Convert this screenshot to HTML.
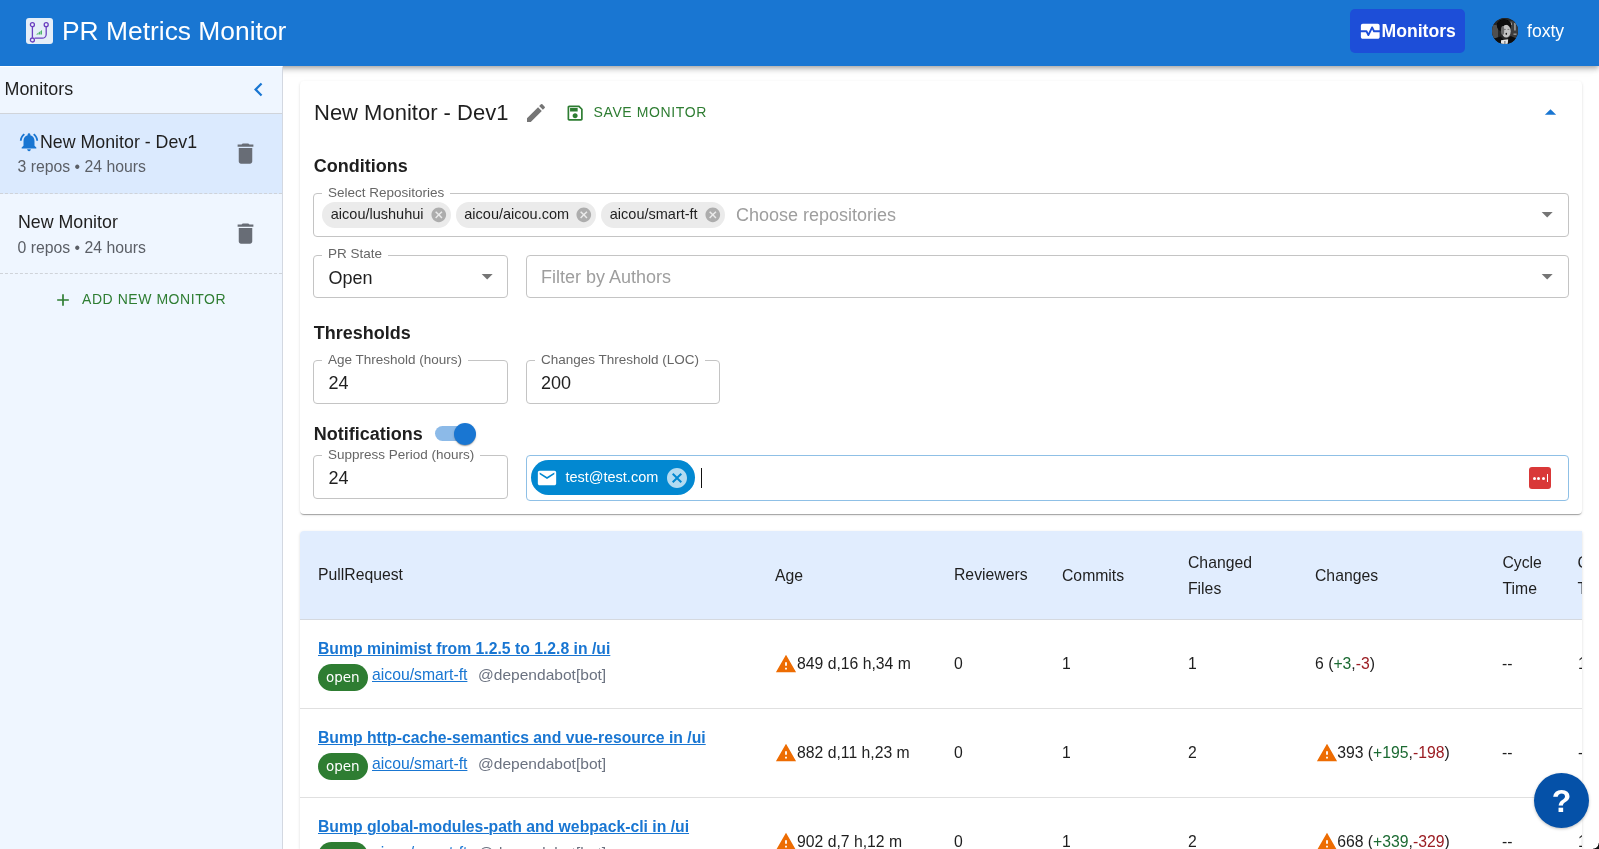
<!DOCTYPE html>
<html lang="en">
<head>
<meta charset="utf-8">
<title>PR Metrics Monitor</title>
<style>
*{box-sizing:border-box;margin:0;padding:0}
html,body{width:1599px;height:849px;overflow:hidden;background:#fff}
body{font-family:"Liberation Sans",Arial,Helvetica,sans-serif;color:#1f1f1f;position:relative;-webkit-font-smoothing:antialiased}
.abs{position:absolute;white-space:nowrap}
/* header */
#appbar{will-change:transform;position:absolute;left:0;top:0;width:1599px;height:66px;background:#1976d2;box-shadow:0 2px 4px -1px rgba(0,0,0,.2),0 4px 5px 0 rgba(0,0,0,.14),0 1px 10px 0 rgba(0,0,0,.12);z-index:5}
#logo{position:absolute;left:26px;top:18px;width:27px;height:26px;border-radius:3px;background:#e5eef8;overflow:hidden}
#apptitle{left:62px;top:16px;font-size:26.4px;line-height:30px;color:#fff}
#navbtn{position:absolute;left:1350px;top:9px;width:115px;height:44px;border-radius:5px;background:#1d4ed8}
#navbtn span{position:absolute;left:31.5px;top:11px;font-size:17.6px;line-height:22px;font-weight:700;color:#fff}
#avatar{position:absolute;left:1492px;top:18px;width:26px;height:26px;border-radius:50%;overflow:hidden;background:#222}
#uname{left:1527px;top:20px;font-size:17.6px;line-height:22px;color:#fff}
/* sidebar */
#side{will-change:transform;position:absolute;left:0;top:66px;width:283px;height:783px;background:#eff6ff;border-right:1px solid #d3d8e1;border-top:1px solid #fff;z-index:6}
#sidehead{position:absolute;left:0;top:-2px;width:282px;height:49px;border-bottom:1px solid #d0d4da}
#sidehead span{position:absolute;left:4.500px;top:13px;font-size:17.900px;line-height:22px;color:#1f1f1f}
.mon{position:absolute;left:0;width:282px;height:80px;border-bottom:1px dashed #cfd3d9}
.mon.sel{background:#dbeafe}
.mon .t{position:absolute;top:17px;font-size:17.800px;line-height:22px;color:#1f1f1f;white-space:nowrap}
.mon .s{position:absolute;left:17.500px;top:42.600px;font-size:15.8px;line-height:20px;color:#5b5f66;white-space:nowrap}
.mon svg.trash{position:absolute;left:231.700px;top:25.800px}
#addmon{left:82px;top:222px;font-size:14px;line-height:20px;color:#2e7d32;letter-spacing:.55px}
/* card */
#card{will-change:transform;position:absolute;left:300px;top:81px;width:1282px;height:433px;background:#fff;border-radius:4px;box-shadow:0 2px 1px -1px rgba(0,0,0,.2),0 1px 1px 0 rgba(0,0,0,.14),0 1px 3px 0 rgba(0,0,0,.12)}
#card h2{position:absolute;left:14px;top:18px;font-size:22px;line-height:26px;font-weight:400;color:#1f1f1f;white-space:nowrap}
#savebtn{left:293.600px;top:20px;font-size:14px;line-height:20px;color:#2e7d32;letter-spacing:.600px}
.sec{position:absolute;left:13.800px;font-size:18px;line-height:22px;font-weight:700;color:#1f1f1f;white-space:nowrap}
.fld{position:absolute;border:1px solid #c4c4c4;border-radius:4px}
.fld .lb{position:absolute;left:8px;top:-9px;padding:0 6px;background:#fff;font-size:13.5px;line-height:16px;color:#666;white-space:nowrap}
.fld .v{position:absolute;left:14.400px;top:10.400px;font-size:18px;line-height:22px;color:#1f1f1f;white-space:nowrap}
.fld .ph{position:absolute;top:10px;font-size:18px;line-height:22px;color:#9e9e9e;white-space:nowrap}
.chip{position:absolute;top:8px;height:26px;border-radius:13px;background:#ebebeb;font-size:14.500px;line-height:25px;color:#1f1f1f;padding-left:8.800px;white-space:nowrap}
.chip svg{position:absolute;right:3.900px;top:4px;width:17.600px;height:17.600px;fill:#adadad}
svg.dd{position:absolute;width:26.400px;height:26.400px;fill:#757575}
#sw{position:absolute;left:135px;top:340px;width:42px;height:24px}
#sw i{position:absolute;left:0;top:4px;width:37.400px;height:15.400px;border-radius:8px;background:#8cbae8}
#sw b{position:absolute;left:19px;top:.800px;width:22px;height:22px;border-radius:50%;background:#1976d2;box-shadow:0 2px 1px -1px rgba(0,0,0,.2),0 1px 1px 0 rgba(0,0,0,.14),0 1px 3px 0 rgba(0,0,0,.12)}
#echip{position:absolute;left:4px;top:4px;width:164px;height:35px;border-radius:18px;background:#0288d1}
#echip span{position:absolute;left:34.400px;top:8px;font-size:14.500px;line-height:18px;color:#fff;white-space:nowrap}
#caret{position:absolute;left:174px;top:11.500px;width:1px;height:20px;background:#111}
#pwicon{position:absolute;left:1002px;top:11px;width:22px;height:22px;border-radius:3px;background:#d93838}
#pwicon i{position:absolute;top:9.500px;width:3px;height:3px;border-radius:50%;background:#fff}
#pwicon i:nth-child(1){left:3.500px}#pwicon i:nth-child(2){left:8px}#pwicon i:nth-child(3){left:12.500px}
#pwicon b{position:absolute;left:17.500px;top:7px;width:1px;height:8px;background:#fff}
#cardin{position:absolute;left:0;top:1px;width:1282px;height:432px}
/* table */
#tbl{will-change:transform;position:absolute;left:300px;top:531px;width:1282px;height:318px;overflow:hidden;background:#fff;border-top-left-radius:4px;box-shadow:0 1px 3px rgba(0,0,0,.15)}
#thead{position:absolute;left:0;top:0;width:1282px;height:89px;background:#e1edfe;border-bottom:1px solid #d5d9df}
.th{position:absolute;font-size:15.75px;line-height:26px;color:#1f1f1f;white-space:nowrap}
.row{position:absolute;left:0;width:1282px;height:89px;border-bottom:1px solid #e0e0e0}
.row .c{position:absolute;top:34px;font-size:15.75px;line-height:20px;color:#1f1f1f;white-space:nowrap}
.row a.pt{position:absolute;left:18px;top:19px;font-size:15.75px;line-height:20px;font-weight:700;color:#1976d2;text-decoration:underline;text-decoration-thickness:1px;white-space:nowrap}
.row .badge{position:absolute;left:18px;top:44px;width:49.600px;height:27px;border-radius:14px;background:#2e7d32;color:#fff;font-family:"DejaVu Sans","Liberation Sans",sans-serif;font-size:13.5px;line-height:27px;text-align:center}
.row a.rp{position:absolute;left:72px;top:45px;font-size:15.75px;line-height:20px;color:#1976d2;text-decoration:underline;text-decoration-thickness:1px;white-space:nowrap}
.row .au{position:absolute;left:178px;top:45px;font-size:15.550px;line-height:20px;color:#6b7280;white-space:nowrap}
.g{color:#1b6a32}.r{color:#9b1c22}
svg.warn{position:absolute}
#help{will-change:transform;position:absolute;left:1534px;top:773px;width:55px;height:55px;border-radius:50%;background:#0551a8;color:#fff;font-size:32px;line-height:56px;font-weight:700;text-align:center;box-shadow:0 1px 3px rgba(0,0,0,.25);z-index:9}
#corner{position:absolute;right:0;bottom:0;width:6px;height:6px;background:radial-gradient(circle at 0 0,transparent 5.200px,#111 6px);z-index:10}
</style>
</head>
<body>
<header id="appbar">
  <div id="logo"><svg width="27" height="26" viewBox="0 0 27 26" fill="none">
    <path d="M6.4 9v4.5M6.4 13.5v6.3M8.6 20.2h7.6a4 4 0 0 0 4-4V9" stroke="#6a3fbf" stroke-width="1.300"/>
    <circle cx="6.4" cy="6.7" r="2" stroke="#6a3fbf" stroke-width="1.300" fill="#e9f0fa"/>
    <circle cx="20.2" cy="6.7" r="2" stroke="#6a3fbf" stroke-width="1.300" fill="#e9f0fa"/>
    <circle cx="6.4" cy="22" r="2" stroke="#6a3fbf" stroke-width="1.300" fill="#e9f0fa"/>
    <path d="M10 16.600l2-1.500v1.500zM12.400 16.600v-1.900l1.600-1.200v3.100zM14.400 16.600v-3.400l1.600-1.200v4.600z" fill="#4db36a"/>
  </svg></div>
  <div class="abs" id="apptitle">PR Metrics Monitor</div>
  <div id="navbtn"><svg style="position:absolute;left:8.7px;top:11.25px" width="22.5" height="22.5" viewBox="0 0 24 24" fill="#fff"><path d="M15.11 12.45 14 10.24l-3.11 6.21c-.16.34-.51.55-.89.55s-.73-.21-.89-.55L7.38 13H2v5c0 1.1.9 2 2 2h16c1.1 0 2-.9 2-2v-5h-6c-.38 0-.73-.21-.89-.55z"/><path d="M20 4H4c-1.1 0-2 .9-2 2v5h6c.38 0 .73.21.89.55L10 13.76l3.11-6.21c.34-.68 1.45-.68 1.79 0L16.620 11H22V6c0-1.100-.9-2-2-2z"/></svg><span>Monitors</span></div>
  <div id="avatar"><svg width="26" height="26" viewBox="0 0 26 26">
    <defs><filter id="bl" x="-10%" y="-10%" width="120%" height="120%"><feGaussianBlur stdDeviation="0.550"/></filter></defs>
    <rect width="26" height="26" fill="#262626"/>
    <g filter="url(#bl)">
      <rect x="-1" y="7" width="7" height="13" fill="#505050"/>
      <rect x="17" y="3" width="10" height="17" fill="#3c3c3c"/>
      <rect x="18.400" y="4.500" width="1.200" height="2.600" fill="#c8c8c8"/>
      <rect x="22.300" y="5" width="1.300" height="7.500" fill="#b4b4b4"/>
      <rect x="21.500" y="15.500" width="3" height="1.400" fill="#9a9a9a"/>
      <ellipse cx="12" cy="7.500" rx="7.200" ry="6.300" fill="#080808"/>
      <ellipse cx="14.200" cy="13.200" rx="4.500" ry="6.400" fill="#c2c2c2"/>
      <ellipse cx="10.600" cy="12.500" rx="1.600" ry="4.600" fill="#6a6a6a"/>
      <path d="M9.500 8.500c1-2.200 6-3 9-1l.3-2.500-8-1.500z" fill="#0c0c0c"/>
      <ellipse cx="14.300" cy="15.800" rx=".8" ry="1.100" fill="#1a1a1a"/>
      <path d="M12 11.400h1.800M15.500 11.400h1.800" stroke="#555" stroke-width=".7"/>
      <path d="M-1 21.500 8.500 18.500l4.500 5 5.500-5.500 8.500 3.500V27H-1z" fill="#0a0a0a"/>
      <path d="M9 22.200 16.200 21.300 15.600 27H9z" fill="#e4e4e4"/>
      <path d="M12.900 23v4" stroke="#444" stroke-width=".8"/>
    </g>
  </svg></div>
  <div class="abs" id="uname">foxty</div>
</header>

<aside id="side">
  <div id="sidehead"><span>Monitors</span><svg style="position:absolute;left:244.8px;top:10.8px" width="27" height="27" viewBox="0 0 24 24" fill="#1976d2"><path d="M15.410 7.410 14 6l-6 6 6 6 1.410-1.410L10.830 12z"/></svg></div>
  <div class="mon sel" style="top:47px">
    <svg style="position:absolute;left:18.100px;top:16.700px" width="22" height="22" viewBox="0 0 24 24" fill="#1976d2"><path d="M7.580 4.080 6.150 2.650C3.750 4.480 2.170 7.300 2.030 10.500h2c.150-2.650 1.510-4.970 3.550-6.420zm12.390 6.420h2c-.150-3.200-1.730-6.020-4.120-7.850l-1.420 1.430c2.020 1.450 3.390 3.770 3.540 6.420zM18 11c0-3.070-1.640-5.640-4.500-6.320V4c0-.830-.670-1.500-1.500-1.500s-1.500.670-1.500 1.500v.680C7.630 5.360 6 7.920 6 11v5l-2 2v1h16v-1l-2-2v-5zm-6 11c.140 0 .270-.010.400-.040.650-.140 1.180-.580 1.440-1.180.100-.240.150-.500.150-.780h-4c.010 1.100.900 2 2.010 2z"/></svg><div class="t" style="left:40px">New Monitor - Dev1</div>
    <div class="s">3 repos • 24 hours</div><svg class="trash" width="27" height="27" viewBox="0 0 24 24" fill="#686d76"><path d="M6 19c0 1.100.9 2 2 2h8c1.100 0 2-.9 2-2V7H6v12zM19 4h-3.500l-1-1h-5l-1 1H5v2h14V4z"/></svg>
  </div>
  <div class="mon" style="top:127px">
    <div class="t" style="left:18px">New Monitor</div>
    <div class="s" style="top:44.300px">0 repos • 24 hours</div><svg class="trash" width="27" height="27" viewBox="0 0 24 24" fill="#686d76"><path d="M6 19c0 1.100.9 2 2 2h8c1.100 0 2-.9 2-2V7H6v12zM19 4h-3.500l-1-1h-5l-1 1H5v2h14V4z"/></svg>
  </div>
  <svg style="position:absolute;left:52.500px;top:222.500px" width="20" height="20" viewBox="0 0 24 24" fill="#2e7d32"><path d="M19 13h-6v6h-2v-6H5v-2h6V5h2v6h6v2z"/></svg><div class="abs" id="addmon">ADD NEW MONITOR</div>
</aside>

<main>
<section id="card"><div id="cardin">
  <h2>New Monitor - Dev1</h2>
  <svg style="position:absolute;left:223.800px;top:19.400px" width="24" height="24" viewBox="0 0 24 24" fill="#757575"><path d="M3 17.250V21h3.750L17.810 9.940l-3.750-3.750L3 17.250zM20.710 7.040c.390-.390.390-1.020 0-1.410l-2.340-2.340a.996.996 0 0 0-1.410 0l-1.830 1.830 3.750 3.750 1.830-1.830z"/></svg>
  <svg style="position:absolute;left:264.600px;top:20.600px" width="20.250" height="20.250" viewBox="0 0 24 24" fill="#2e7d32"><path d="M17 3H5c-1.110 0-2 .9-2 2v14c0 1.100.890 2 2 2h14c1.100 0 2-.9 2-2V7l-4-4zm2 16H5V5h11.170L19 7.830V19zm-7-7c-1.660 0-3 1.340-3 3s1.340 3 3 3 3-1.340 3-3-1.340-3-3-3zM6 6h9v4H6z"/></svg>
  <div class="abs" id="savebtn">SAVE MONITOR</div>
  <svg style="position:absolute;left:1236.500px;top:16.500px" width="27" height="27" viewBox="0 0 24 24" fill="#1976d2"><path d="M7 14l5-5 5 5z"/></svg>
  <div class="sec" style="top:73px">Conditions</div>
  <div class="fld" style="left:13px;top:111px;width:1256px;height:44px">
    <span class="lb">Select Repositories</span>
    <span class="chip" style="left:8px;width:129px">aicou/lushuhui<svg viewBox="0 0 24 24"><path d="M12 2C6.470 2 2 6.470 2 12s4.470 10 10 10 10-4.470 10-10S17.530 2 12 2zm5 13.590L15.590 17 12 13.410 8.410 17 7 15.590 10.590 12 7 8.410 8.410 7 12 10.590 15.590 7 17 8.410 13.410 12 17 15.590z"/></svg></span>
    <span class="chip" style="left:141.500px;width:140.500px">aicou/aicou.com<svg viewBox="0 0 24 24"><path d="M12 2C6.470 2 2 6.470 2 12s4.470 10 10 10 10-4.470 10-10S17.530 2 12 2zm5 13.590L15.590 17 12 13.410 8.410 17 7 15.590 10.590 12 7 8.410 8.410 7 12 10.590 15.590 7 17 8.410 13.410 12 17 15.590z"/></svg></span>
    <span class="chip" style="left:287px;width:124px">aicou/smart-ft<svg viewBox="0 0 24 24"><path d="M12 2C6.470 2 2 6.470 2 12s4.470 10 10 10 10-4.470 10-10S17.530 2 12 2zm5 13.590L15.590 17 12 13.410 8.410 17 7 15.590 10.590 12 7 8.410 8.410 7 12 10.590 15.590 7 17 8.410 13.410 12 17 15.590z"/></svg></span>
    <span class="ph" style="left:422px">Choose repositories</span>
    <svg class="dd" style="left:1220px;top:7px" viewBox="0 0 24 24"><path d="M7 10l5 5 5-5z"/></svg>
  </div>
  <div class="fld" style="left:13px;top:173px;width:195px;height:43px">
    <span class="lb" style="top:-10px">PR State</span><span class="v" style="top:11px">Open</span>
    <svg class="dd" style="left:160px;top:7px" viewBox="0 0 24 24"><path d="M7 10l5 5 5-5z"/></svg>
  </div>
  <div class="fld" style="left:226px;top:173px;width:1043px;height:43px">
    <span class="ph" style="left:14px">Filter by Authors</span>
    <svg class="dd" style="left:1007px;top:7px" viewBox="0 0 24 24"><path d="M7 10l5 5 5-5z"/></svg>
  </div>
  <div class="sec" style="top:240px">Thresholds</div>
  <div class="fld" style="left:13px;top:278px;width:195px;height:44px">
    <span class="lb">Age Threshold (hours)</span><span class="v" style="top:11.400px">24</span>
  </div>
  <div class="fld" style="left:226px;top:278px;width:194px;height:44px">
    <span class="lb">Changes Threshold (LOC)</span><span class="v" style="left:14px;top:11.400px">200</span>
  </div>
  <div class="sec" style="top:341px">Notifications</div>
  <div id="sw"><i></i><b></b></div>
  <div class="fld" style="left:13px;top:373px;width:195px;height:44px">
    <span class="lb">Suppress Period (hours)</span><span class="v" style="top:11.400px">24</span>
  </div>
  <div class="fld" id="emails" style="left:226px;top:373px;width:1043px;height:46px;border-color:#8fc0e6">
    <div id="echip">
      <svg style="position:absolute;left:5px;top:7px" width="22" height="22" viewBox="0 0 24 24" fill="#fff"><path d="M20 4H4c-1.100 0-1.990.9-1.990 2L2 18c0 1.100.9 2 2 2h16c1.100 0 2-.9 2-2V6c0-1.100-.9-2-2-2zm0 4-8 5-8-5V6l8 5 8-5v2z"/></svg>
      <span>test@test.com</span>
      <svg style="position:absolute;left:134px;top:6px" width="24" height="24" viewBox="0 0 24 24" fill="#b3dbf1"><path d="M12 2C6.470 2 2 6.470 2 12s4.470 10 10 10 10-4.470 10-10S17.530 2 12 2zm5 13.590L15.590 17 12 13.410 8.410 17 7 15.590 10.590 12 7 8.410 8.410 7 12 10.590 15.590 7 17 8.410 13.410 12 17 15.590z"/></svg>
    </div>
    <div id="caret"></div>
    <div id="pwicon"><i></i><i></i><i></i><b></b></div>
  </div>
</div></section>

<section id="tbl">
  <div id="thead">
    <span class="th" style="left:18px;top:31px">PullRequest</span>
    <span class="th" style="left:475px;top:32px">Age</span>
    <span class="th" style="left:654px;top:31px">Reviewers</span>
    <span class="th" style="left:762px;top:32px">Commits</span>
    <span class="th" style="left:888px;top:19px">Changed<br>Files</span>
    <span class="th" style="left:1015px;top:32px">Changes</span>
    <span class="th" style="left:1202.500px;top:19px">Cycle<br>Time</span>
    <span class="th" style="left:1277.500px;top:19px">Cycle<br>Time</span>
  </div>
  <div class="row" style="top:89px">
    <a class="pt">Bump minimist from 1.2.5 to 1.2.8 in /ui</a>
    <span class="badge">open</span><a class="rp">aicou/smart-ft</a><span class="au">@dependabot[bot]</span>
    <svg class="warn" style="left:475.1px;top:33.300px" width="22" height="22" viewBox="0 0 24 24" fill="#ed6c02"><path d="M1 21h22L12 2 1 21zm12-3h-2v-2h2v2zm0-4h-2v-4h2v4z"/></svg><span class="c" style="left:497px">849 d,16 h,34 m</span>
    <span class="c" style="left:654px">0</span><span class="c" style="left:762px">1</span><span class="c" style="left:888px">1</span>
    <span class="c" style="left:1015px">6 (<span class="g">+3</span>,<span class="r">-3</span>)</span>
    <span class="c" style="left:1202px">--</span><span class="c" style="left:1278px">1</span>
  </div>
  <div class="row" style="top:178px">
    <a class="pt">Bump http-cache-semantics and vue-resource in /ui</a>
    <span class="badge">open</span><a class="rp">aicou/smart-ft</a><span class="au">@dependabot[bot]</span>
    <svg class="warn" style="left:475.1px;top:33.300px" width="22" height="22" viewBox="0 0 24 24" fill="#ed6c02"><path d="M1 21h22L12 2 1 21zm12-3h-2v-2h2v2zm0-4h-2v-4h2v4z"/></svg><span class="c" style="left:497px">882 d,11 h,23 m</span>
    <span class="c" style="left:654px">0</span><span class="c" style="left:762px">1</span><span class="c" style="left:888px">2</span>
    <svg class="warn" style="left:1016.3px;top:33.300px" width="22" height="22" viewBox="0 0 24 24" fill="#ed6c02"><path d="M1 21h22L12 2 1 21zm12-3h-2v-2h2v2zm0-4h-2v-4h2v4z"/></svg><span class="c" style="left:1037.200px">393 (<span class="g">+195</span>,<span class="r">-198</span>)</span>
    <span class="c" style="left:1202px">--</span><span class="c" style="left:1278px">--</span>
  </div>
  <div class="row" style="top:267px">
    <a class="pt">Bump global-modules-path and webpack-cli in /ui</a>
    <span class="badge">open</span><a class="rp">aicou/smart-ft</a><span class="au">@dependabot[bot]</span>
    <svg class="warn" style="left:475.1px;top:33.300px" width="22" height="22" viewBox="0 0 24 24" fill="#ed6c02"><path d="M1 21h22L12 2 1 21zm12-3h-2v-2h2v2zm0-4h-2v-4h2v4z"/></svg><span class="c" style="left:497px">902 d,7 h,12 m</span>
    <span class="c" style="left:654px">0</span><span class="c" style="left:762px">1</span><span class="c" style="left:888px">2</span>
    <svg class="warn" style="left:1016.3px;top:33.300px" width="22" height="22" viewBox="0 0 24 24" fill="#ed6c02"><path d="M1 21h22L12 2 1 21zm12-3h-2v-2h2v2zm0-4h-2v-4h2v4z"/></svg><span class="c" style="left:1037.200px">668 (<span class="g">+339</span>,<span class="r">-329</span>)</span>
    <span class="c" style="left:1202px">--</span><span class="c" style="left:1278px">1</span>
  </div>
</section>
</main>
<div id="help">?</div>
<div id="corner"></div>
</body>
</html>
